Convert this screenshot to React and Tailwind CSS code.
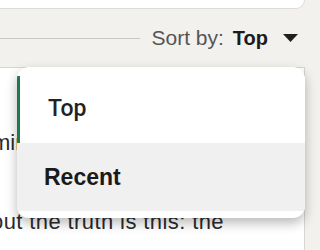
const font = { fontFamily: '"Liberation Sans", Arial, sans-serif' }
const roboto = { fontFamily: 'Roboto, "Liberation Sans", sans-serif' }

function SortBar() {
  return (
    <div className="flex items-center h-[58px] pr-[22px]">
      <div className="flex-1 h-px bg-[#c9c9c5]" />
      <span className="ml-[11px] text-[21px] text-[#555555]">Sort by:</span>
      <span className="ml-[9px] text-[20px] font-bold text-[#1c1c1c]">Top</span>
      <svg className="ml-[15px]" width="15" height="8" viewBox="0 0 15 8">
        <polygon points="0,0 15,0 7.5,8" fill="#1f1f1f" />
      </svg>
    </div>
  )
}

function SortMenu() {
  return (
    <div className="absolute left-[17px] top-[67px] w-[288px] bg-white rounded-[12px] shadow-[0_5px_12px_rgba(0,0,0,0.28)] pt-[9px] pb-[7px] overflow-hidden">
      <div
        className="h-[67px] flex items-center border-l-[3px] border-[#1b7a50] pl-[28px] text-[23px] font-medium text-[#222222]"
        style={roboto}
      >
        Top
      </div>
      <div className="h-[68px] flex items-center bg-[#f0f0f0] pl-[27px] text-[23px] font-bold text-[#1a1a1a]">
        Recent
      </div>
    </div>
  )
}

export default function App() {
  return (
    <div className="relative w-[320px] h-[250px] overflow-hidden bg-[#f2f1ee]" style={font}>
      <div className="h-[9px] w-[305px] bg-white border-b border-r border-[#dcdcd8] rounded-br-[10px]" />
      <SortBar />
      <div className="w-[305px] h-[200px] bg-white border-t border-r border-[#d6d6d2] overflow-hidden">
        <p className="mt-[60px] ml-[-8px] whitespace-nowrap text-[22px] leading-[30px] text-[#2b2b2b]">
          mind, but nobody saw it coming
        </p>
        <div className="mt-[49px] ml-[-9px] whitespace-nowrap text-[22px] tracking-[0.4px] leading-[30px] text-[#2b2b2b]">
          <p>out the truth is this: the</p>
          <p className="mt-[11px]">whole thing felt like a test</p>
        </div>
      </div>
      <SortMenu />
    </div>
  )
}
